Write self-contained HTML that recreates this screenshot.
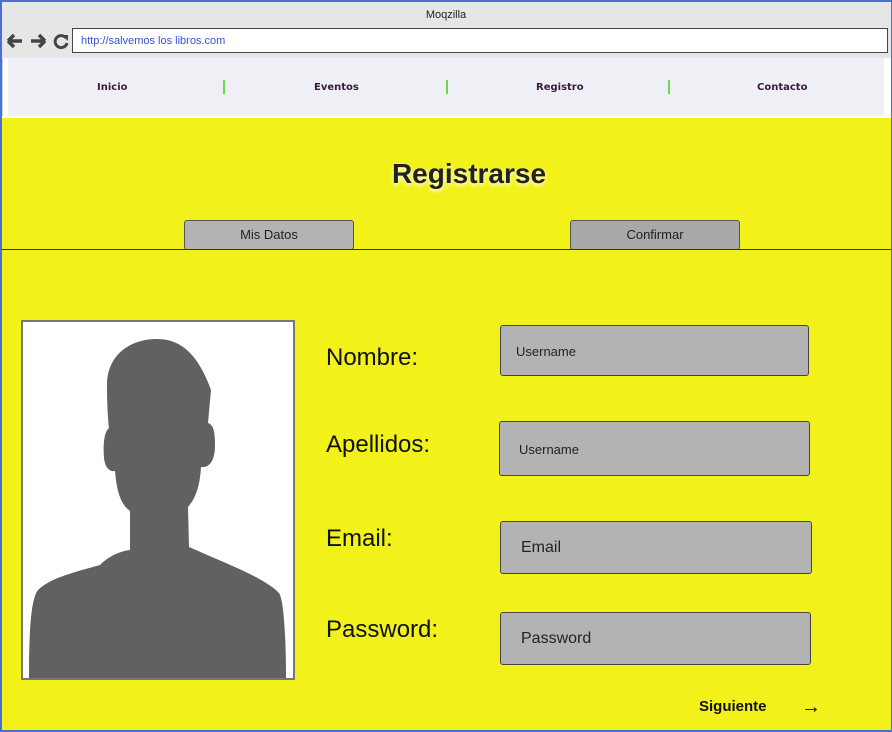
<!DOCTYPE html>
<html><head><meta charset="utf-8"><style>
*{margin:0;padding:0;box-sizing:border-box}
body{width:892px;height:732px;overflow:hidden;background:#f2f21a;font-family:"Liberation Sans",Arial,sans-serif;position:relative}
.a{position:absolute}
.frame{left:0;top:0;width:892px;height:732px;border:2px solid #4a6fd6;border-right-width:1px;pointer-events:none}
.inp{position:absolute;background:#b3b3b3;border:1px solid #444;border-radius:3px;color:#222}
.lbl{position:absolute;font-size:24px;color:#111}
.nav{font-size:10px;font-weight:bold;color:#3a1a3a;font-family:"DejaVu Sans",sans-serif;top:82px}
.sep{width:2px;height:14px;background:#6bd94a;top:80px}
.btn{position:absolute;top:220px;width:170px;height:30px;border:1px solid #555;border-radius:3px;font-size:13px;text-align:center;line-height:28px;color:#222}
</style></head><body>
<div class="a" style="left:0;top:0;width:892px;height:58px;background:#e6e6e6"></div>
<div class="a" style="left:0;top:9px;width:892px;text-align:center;font-size:11px;color:#222">Moqzilla</div>
<svg class="a" style="left:5px;top:31px" width="66" height="20" viewBox="0 0 66 20">
<path d="M3 10h14M3 10l6-6M3 10l6 6" stroke="#444" stroke-width="3.5" fill="none"/>
<path d="M40 10h-14M40 10l-6-6M40 10l-6 6" stroke="#444" stroke-width="3.5" fill="none"/>
<path d="M61 7a6 6 0 1 0 1 5" stroke="#444" stroke-width="3" fill="none"/><path d="M57 4l6 0l0 6z" fill="#444"/>
</svg>
<div class="a" style="left:72px;top:28px;width:816px;height:25px;background:#fff;border:1px solid #444;font-size:11px;color:#3355cc;padding:6px 0 0 8px">http://salvemos los libros.com</div>
<div class="a" style="left:0;top:58px;width:892px;height:58px;background:#eef0f6;border-left:8px solid #fff;border-right:8px solid #fff"></div>
<div class="a" style="left:0;top:58px;width:3px;height:58px;background:#c8d0ee"></div>
<div class="a nav" style="left:97px">Inicio</div>
<div class="a sep" style="left:223px"></div>
<div class="a nav" style="left:314px">Eventos</div>
<div class="a sep" style="left:446px"></div>
<div class="a nav" style="left:536px">Registro</div>
<div class="a sep" style="left:668px"></div>
<div class="a nav" style="left:757px">Contacto</div>
<div class="a" style="left:0;top:116px;width:892px;height:2px;background:#fff"></div>
<div class="a" style="left:0;top:158px;width:938px;text-align:center;font-size:28px;font-weight:bold;color:#222;text-shadow:0 2px 4px #fff">Registrarse</div>
<div class="btn" style="left:184px;background:#b3b3b3">Mis Datos</div>
<div class="btn" style="left:570px;background:#a8a8a8">Confirmar</div>
<div class="a" style="left:0;top:249px;width:892px;height:1px;background:#333"></div>
<div class="a" style="left:21px;top:320px;width:274px;height:360px;background:#fff;border:2px solid #777"></div>
<svg class="a" style="left:0;top:0" width="300" height="690">
<path fill="#616161" d="M157 339C130 339 107 355 107 385C107 405 108 420 109 428C104 432 103 445 104 458C105 468 110 472 115 471C117 495 122 505 130 511L130 550C115 552 105 560 100 565C75 572 50 578 38 590C30 600 29 640 29 678L286 678C286 640 284 600 279 593C265 578 225 563 189 547L188 507C196 498 200 485 201 467C210 468 215 460 215 445C215 430 213 425 208 423L211 390C200 360 185 339 157 339Z"/>
</svg>
<div class="lbl" style="left:326px;top:344px">Nombre:</div>
<div class="lbl" style="left:326px;top:431px">Apellidos:</div>
<div class="lbl" style="left:326px;top:525px">Email:</div>
<div class="lbl" style="left:326px;top:616px">Password:</div>
<div class="inp" style="left:500px;top:325px;width:309px;height:51px;font-size:13px;padding:18px 0 0 15px">Username</div>
<div class="inp" style="left:499px;top:421px;width:311px;height:55px;font-size:13px;padding:20px 0 0 19px">Username</div>
<div class="inp" style="left:500px;top:521px;width:312px;height:53px;font-size:16px;padding:17px 0 0 20px">Email</div>
<div class="inp" style="left:500px;top:612px;width:311px;height:53px;font-size:16px;padding:17px 0 0 20px">Password</div>
<div class="a" style="left:699px;top:698px;font-size:15px;font-weight:bold;color:#111">Siguiente</div>
<div class="a" style="left:801px;top:696px;font-size:20px;color:#111;font-weight:bold">→</div>
<div class="a frame"></div>
</body></html>
